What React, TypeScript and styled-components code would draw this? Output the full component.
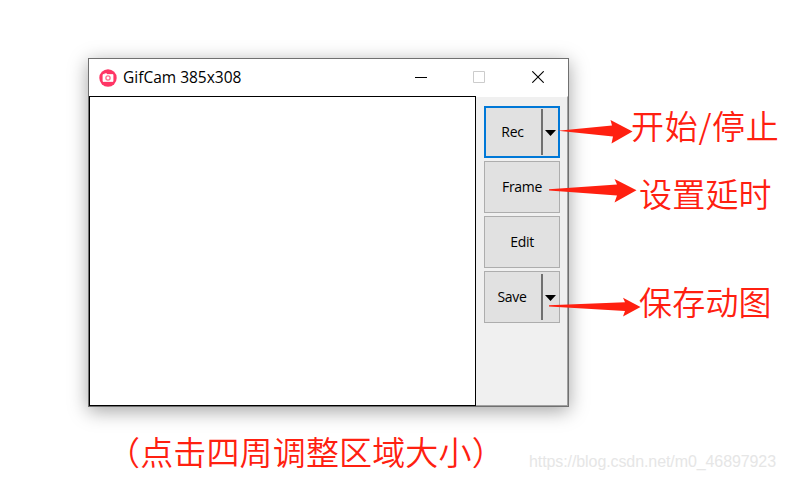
import React from "react";
import styled, { createGlobalStyle } from "styled-components";

const RED = "#ff2010";

const GlobalStyle = createGlobalStyle`
  * { box-sizing: border-box; }
  html, body { margin: 0; background: #fff; overflow: hidden; }
`;

const Stage = styled.main`
  position: relative;
  width: 786px;
  height: 480px;
  padding: 58px 0 0 88px;
  background: #fff;
  overflow: hidden;
`;

const AppWindow = styled.section`
  display: flex;
  flex-direction: column;
  width: 481px;
  height: 349px;
  border: 1px solid #707070;
  background: #fff;
  box-shadow: 0 4px 18px rgba(0, 0, 0, 0.36);
  font-family: "Open Sans", "Noto Sans", sans-serif;
  color: #000;
`;

const TitleBar = styled.header`
  display: flex;
  align-items: center;
  height: 37px;
  padding-left: 10px;
`;

const Title = styled.h1`
  flex: 1;
  margin: -2px 0 0 6px;
  font-size: 15.5px;
  line-height: 20px;
  font-weight: 400;
  letter-spacing: 0;
  white-space: nowrap;
`;

const Controls = styled.div`
  display: flex;
  width: 176px;
`;

const Control = styled.button`
  display: flex;
  align-items: center;
  justify-content: center;
  width: 58.6px;
  height: 37px;
  padding: 0;
  border: 0;
  background: none;
`;

const MaximizeControl = styled(Control)`
  padding: 0 2px 2px 0;
`;

const CloseControl = styled(Control)`
  padding-bottom: 1px;
`;

const Body = styled.div`
  display: flex;
  flex: 1;
`;

const CaptureArea = styled.div`
  width: 387px;
  border: 1px solid #000;
`;

const SidePanel = styled.aside`
  display: flex;
  flex: 1;
  flex-direction: column;
  gap: 3px;
  margin: 0;
  padding: 9px 7px 0 8px;
  border: solid #a0a0a0;
  border-width: 0 1px 1px 0;
  border-top: 1px solid #fff;
  background: #f0f0f0;
`;

const ToolButton = styled.button<{ $focused?: boolean }>`
  display: flex;
  align-items: center;
  width: 76px;
  height: 52px;
  padding: 0;
  border: ${(p) => (p.$focused ? "2px solid #0078d7" : "1px solid #adadad")};
  background: #e1e1e1;
  color: #000;
  font: 400 14px/20px "Open Sans", "Noto Sans", sans-serif;
  letter-spacing: -0.3px;
`;

const ButtonLabel = styled.span<{ $menu?: boolean }>`
  flex: 1;
  padding-right: ${(p) => (p.$menu ? 2 : 0)}px;
  text-align: center;
`;

const DropDown = styled.span<{ $focused?: boolean }>`
  display: flex;
  align-items: center;
  justify-content: center;
  width: ${(p) => (p.$focused ? 17 : 18)}px;
  height: 46px;
  padding: 1px ${(p) => (p.$focused ? 0 : 1)}px 0 0;
  border-left: 2px solid #707070;
`;

const Note = styled.span<{ $x: number; $y: number; $tracking?: number }>`
  position: absolute;
  left: ${(p) => p.$x}px;
  top: ${(p) => p.$y}px;
  color: ${RED};
  font: 350 33px/40px "Noto Sans CJK SC", sans-serif;
  letter-spacing: ${(p) => p.$tracking ?? 0.2}px;
  white-space: nowrap;
`;

const Arrow = styled.svg<{ $x: number; $y: number }>`
  position: absolute;
  left: ${(p) => p.$x}px;
  top: ${(p) => p.$y}px;
  fill: ${RED};
`;

const Caption = styled.p`
  margin: 24px 0 0 19px;
  color: ${RED};
  font: 350 33px/40px "Noto Sans CJK SC", sans-serif;
  letter-spacing: 0.15px;
  white-space: nowrap;
`;

const Watermark = styled.span`
  position: absolute;
  left: 529px;
  top: 452px;
  color: #e6e6e6;
  font: 400 16px/20px "Liberation Sans", Arial, sans-serif;
  letter-spacing: -0.09px;
  white-space: nowrap;
`;

const CameraIcon = () => (
  <svg width="18" height="18" viewBox="0 0 18 18">
    <circle cx="9" cy="9" r="8.7" fill="#ff3565" />
    <path d="M4 5.6h1.2l.5-.8h2l.6.8H14v6.8H4z" fill="#fff" stroke="#fff" strokeWidth=".8" strokeLinejoin="round" />
    <circle cx="9" cy="9" r="2.1" fill="#fff" stroke="#ff6c8e" strokeWidth="1.3" />
  </svg>
);

const Caret = () => (
  <svg width="11" height="6" viewBox="0 0 11 6">
    <path d="M0 0h11L5.5 6z" fill="#000" />
  </svg>
);

const tools = [
  { label: "Rec", menu: true, focused: true },
  { label: "Frame" },
  { label: "Edit" },
  { label: "Save", menu: true },
];

export default function App() {
  return (
    <Stage>
      <GlobalStyle />
      <AppWindow>
        <TitleBar>
          <CameraIcon />
          <Title>GifCam 385x308</Title>
          <Controls>
            <Control aria-label="Minimize">
              <svg width="12" height="12"><path d="M0 5.5h12" stroke="#000" /></svg>
            </Control>
            <MaximizeControl aria-label="Maximize">
              <svg width="12" height="12"><path d="M.5.5h11v11H.5z" fill="none" stroke="#ccc" /></svg>
            </MaximizeControl>
            <CloseControl aria-label="Close">
              <svg width="12" height="12"><path d="M.3.3l11.4 11.4M11.7.3L.3 11.7" stroke="#000" strokeWidth="1.1" /></svg>
            </CloseControl>
          </Controls>
        </TitleBar>
        <Body>
          <CaptureArea />
          <SidePanel>
            {tools.map((t) => (
              <ToolButton key={t.label} $focused={t.focused}>
                <ButtonLabel $menu={t.menu}>{t.label}</ButtonLabel>
                {t.menu && <DropDown $focused={t.focused}><Caret /></DropDown>}
              </ToolButton>
            ))}
          </SidePanel>
        </Body>
      </AppWindow>
      <Caption>（点击四周调整区域大小）</Caption>

      <Arrow $x={558} $y={119} width="76" height="26"><path d="M0 11.7L54 6.5 52.5 1 74.5 12.5 53.5 24.5 55 17.5z" /></Arrow>
      <Note $x={631} $y={105} $tracking={0.7}>开始/停止</Note>
      <Arrow $x={549} $y={178} width="89" height="26"><path d="M0 11.2L68 6.5 65.5 1 87.5 12.3 65.5 24.5 68 17.5 0 12.5z" /></Arrow>
      <Note $x={639} $y={173}>设置延时</Note>
      <Arrow $x={549} $y={297} width="92" height="21"><path d="M0 8.3L76 5.3 74 .7 91.5 10 74 19.5 76 14 0 9.5z" /></Arrow>
      <Note $x={639} $y={281}>保存动图</Note>
      <Watermark>https://blog.csdn.net/m0_46897923</Watermark>
    </Stage>
  );
}
